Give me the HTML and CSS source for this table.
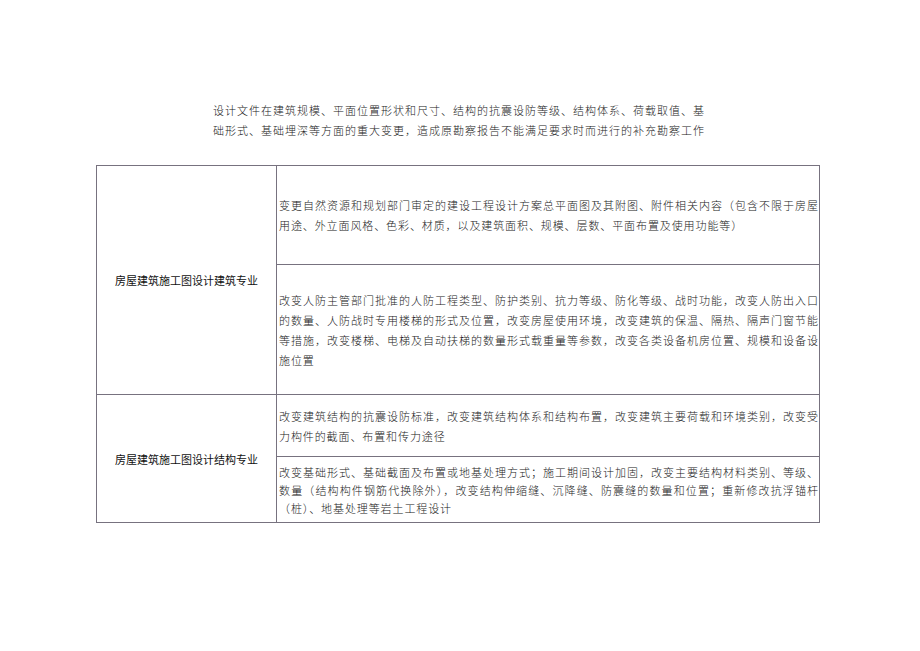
FILE: index.html
```html
<!DOCTYPE html>
<html lang="zh-CN">
<head>
<meta charset="utf-8">
<link rel="stylesheet" href="styles.css">
</head>
<body>
<div class="page">
  <p class="intro">设计文件在建筑规模、平面位置形状和尺寸、结构的抗震设防等级、结构体系、荷载取值、基<br>础形式、基础埋深等方面的重大变更，造成原勘察报告不能满足要求时而进行的补充勘察工作</p>
  <table class="grid">
    <tr class="r1">
      <td class="major" rowspan="2">房屋建筑施工图设计建筑专业</td>
      <td class="desc">变更自然资源和规划部门审定的建设工程设计方案总平面图及其附图、附件相关内容（包含不限于房屋用途、外立面风格、色彩、材质，以及建筑面积、规模、层数、平面布置及使用功能等）</td>
    </tr>
    <tr class="r2">
      <td class="desc">改变人防主管部门批准的人防工程类型、防护类别、抗力等级、防化等级、战时功能，改变人防出入口的数量、人防战时专用楼梯的形式及位置，改变房屋使用环境，改变建筑的保温、隔热、隔声门窗节能等措施，改变楼梯、电梯及自动扶梯的数量形式载重量等参数，改变各类设备机房位置、规模和设备设施位置</td>
    </tr>
    <tr class="r3">
      <td class="major" rowspan="2">房屋建筑施工图设计结构专业</td>
      <td class="desc">改变建筑结构的抗震设防标准，改变建筑结构体系和结构布置，改变建筑主要荷载和环境类别，改变受力构件的截面、布置和传力途径</td>
    </tr>
    <tr class="r4">
      <td class="desc tight">改变基础形式、基础截面及布置或地基处理方式；施工期间设计加固，改变主要结构材料类别、等级、数量（结构构件钢筋代换除外），改变结构伸缩缝、沉降缝、防震缝的数量和位置；重新修改抗浮锚杆（桩）、地基处理等岩土工程设计</td>
    </tr>
  </table>
</div>
</body>
</html>
```

FILE: styles.css
```css
html, body {
  margin: 0;
  padding: 0;
  background: #ffffff;
}

.page {
  width: 920px;
  height: 651px;
  padding-top: 100px;
  box-sizing: border-box;
}

.intro {
  width: 492px;
  margin: 0 auto 0 213px;
  font-family: "Noto Sans CJK SC", sans-serif;
  font-weight: 300;
  font-size: 11px;
  letter-spacing: 1px;
  line-height: 20px;
  color: #222;
  text-align: justify;
  text-align-last: justify;
}

.grid {
  margin: 25px 0 0 96px;
  border-collapse: collapse;
  table-layout: fixed;
  width: 724px;
}

.grid td {
  border: 1px solid #77727f;
  padding: 0;
  vertical-align: middle;
}

.major {
  width: 179px;
  text-align: center;
  font-family: "Noto Sans CJK SC", sans-serif;
  font-size: 11px;
  line-height: 16px;
  color: #111;
}

.desc {
  padding: 0 0 0 2px !important;
  font-family: "Noto Sans CJK SC", sans-serif;
  font-weight: 300;
  font-size: 11px;
  letter-spacing: 0.9px;
  line-height: 20px;
  color: #222;
  text-align: justify;
}

.desc.tight {
  line-height: 18px;
}

.r1 { height: 99px; }
.r2 { height: 130px; }
.r3 { height: 62px; }
.r4 { height: 66px; }
```
